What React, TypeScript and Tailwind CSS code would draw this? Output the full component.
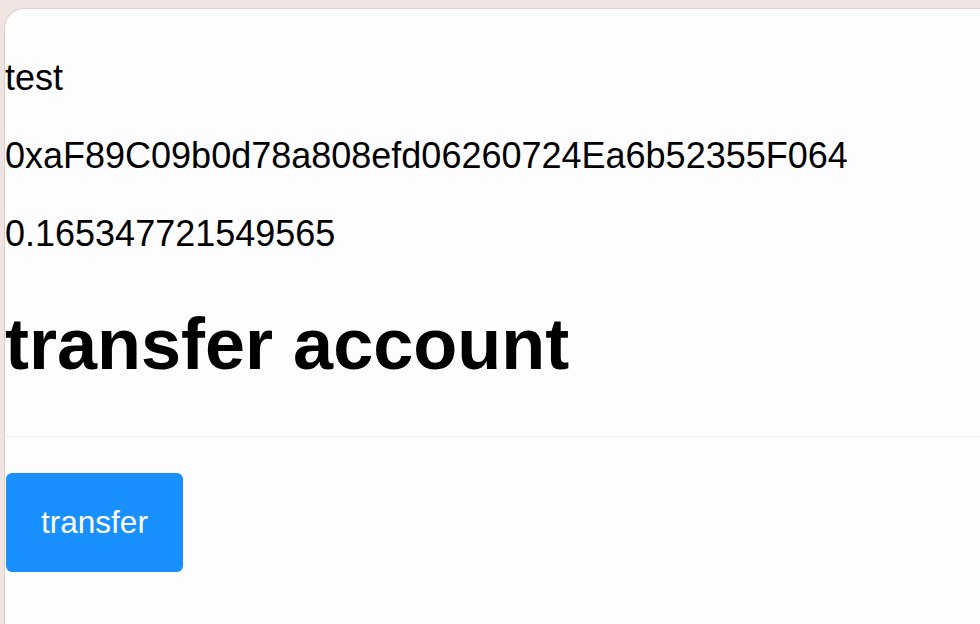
import React from "react";

export default function App() {
  return (
    <div
      className="w-[980px] h-[624px] overflow-hidden bg-[#efe4e1] pt-[8px] pl-[4px]"
      style={{ fontFamily: '"Liberation Sans", Arial, sans-serif' }}
    >
      <div className="h-[616px] bg-[#fdfdff] rounded-tl-[20px] border-t border-l border-[#ddd0cc] flex flex-col text-black">
        <p className="mt-[48px] text-[36px] leading-[41px]">test</p>
        <p className="mt-[37px] text-[36px] leading-[41px]">
          0xaF89C09b0d78a808efd06260724Ea6b52355F064
        </p>
        <p className="mt-[37px] text-[36px] leading-[41px]">0.165347721549565</p>
        <h1 className="mt-[49px] text-[72px] leading-[83px] font-bold">transfer account</h1>
        <div className="mt-[50px] h-px bg-[#f0f0f2]" />
        <div className="mt-[36px] flex">
          <button className="ml-[1px] w-[177px] h-[99px] rounded-[6px] bg-[#1890ff] text-white text-[31.5px] leading-none">
            transfer
          </button>
        </div>
      </div>
    </div>
  );
}
